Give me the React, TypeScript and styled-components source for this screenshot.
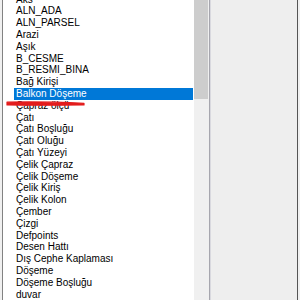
import React, { FC } from 'react';
import styled, { createGlobalStyle, css } from 'styled-components';

const GlobalStyle = createGlobalStyle`
  html, body {
    margin: 0;
    padding: 0;
    background: #f0f0f0;
  }
`;

const layers = [
  'Aks',
  'ALN_ADA',
  'ALN_PARSEL',
  'Arazi',
  'Aşık',
  'B_CESME',
  'B_RESMI_BINA',
  'Bağ Kirişi',
  'Balkon Döşeme',
  'Çapraz ölçü',
  'Çatı',
  'Çatı Boşluğu',
  'Çatı Oluğu',
  'Çatı Yüzeyi',
  'Çelik Çapraz',
  'Çelik Döşeme',
  'Çelik Kiriş',
  'Çelik Kolon',
  'Çember',
  'Çizgi',
  'Defpoints',
  'Desen Hattı',
  'Dış Cephe Kaplaması',
  'Döşeme',
  'Döşeme Boşluğu',
  'duvar',
];

const SELECTED = 'Balkon Döşeme';

const Window = styled.div`
  position: relative;
  display: flex;
  width: 300px;
  height: 300px;
  padding-left: 2px;
  box-sizing: border-box;
  overflow: hidden;
  background: #f0f0f0;
  font-family: 'Liberation Sans', Arial, sans-serif;
`;

const ListBox = styled.div`
  display: flex;
  width: 206px;
  height: 100%;
  border-left: 1px solid #828282;
  background: #ffffff;
`;

// list is scrolled a few pixels, so the first row is cut at the top
const Items = styled.ul`
  flex: 1;
  list-style: none;
  margin: -6.4px 0 0 0;
  padding: 0 1px 0 11px;
  overflow: hidden;
`;

const Item = styled.li<{ selected?: boolean }>`
  height: 11.8px;
  line-height: 12px;
  padding-left: 2px;
  font-size: 10px;
  color: #000;
  white-space: nowrap;

  ${({ selected }) =>
    selected &&
    css`
      background: #0078d7;
      color: #fff;
    `}
`;

const ScrollBar = styled.div`
  width: 14px;
  height: 100%;
  background: #f0f0f0;
  border-right: 1px solid #f0f0f0;
`;

const Thumb = styled.div`
  height: 99px;
  background: #cdcdcd;
`;

const Divider = styled.div`
  width: 1px;
  height: 100%;
  background: #a6a6ae;
  border-right: 1px solid #d9d9df;
`;

const Panel = styled.div`
  width: 86px;
  height: 100%;
  background: #eeeeee;
  border-right: 1px solid #555555;
`;

const Marker = styled.svg`
  position: absolute;
  left: 0;
  top: 0;
  pointer-events: none;
`;

const App: FC = () => {
  return (
    <>
      <GlobalStyle />
      <Window>
        <ListBox>
          <Items>
            {layers.map((name) => (
              <Item key={name} selected={name === SELECTED}>
                {name}
              </Item>
            ))}
          </Items>
          <ScrollBar>
            <Thumb />
          </ScrollBar>
        </ListBox>
        <Divider />
        <Panel />
        <Marker width="300" height="300" viewBox="0 0 300 300">
          <path
            d="M7 102.2 C 30 101.6, 60 102.2, 84 103.4 L 84 105 C 60 105.2, 30 105.4, 7 105 Z"
            fill="#e31c1c"
            stroke="#e31c1c"
            strokeWidth="1.2"
            strokeLinejoin="round"
          />
        </Marker>
      </Window>
    </>
  );
};

export default App;
